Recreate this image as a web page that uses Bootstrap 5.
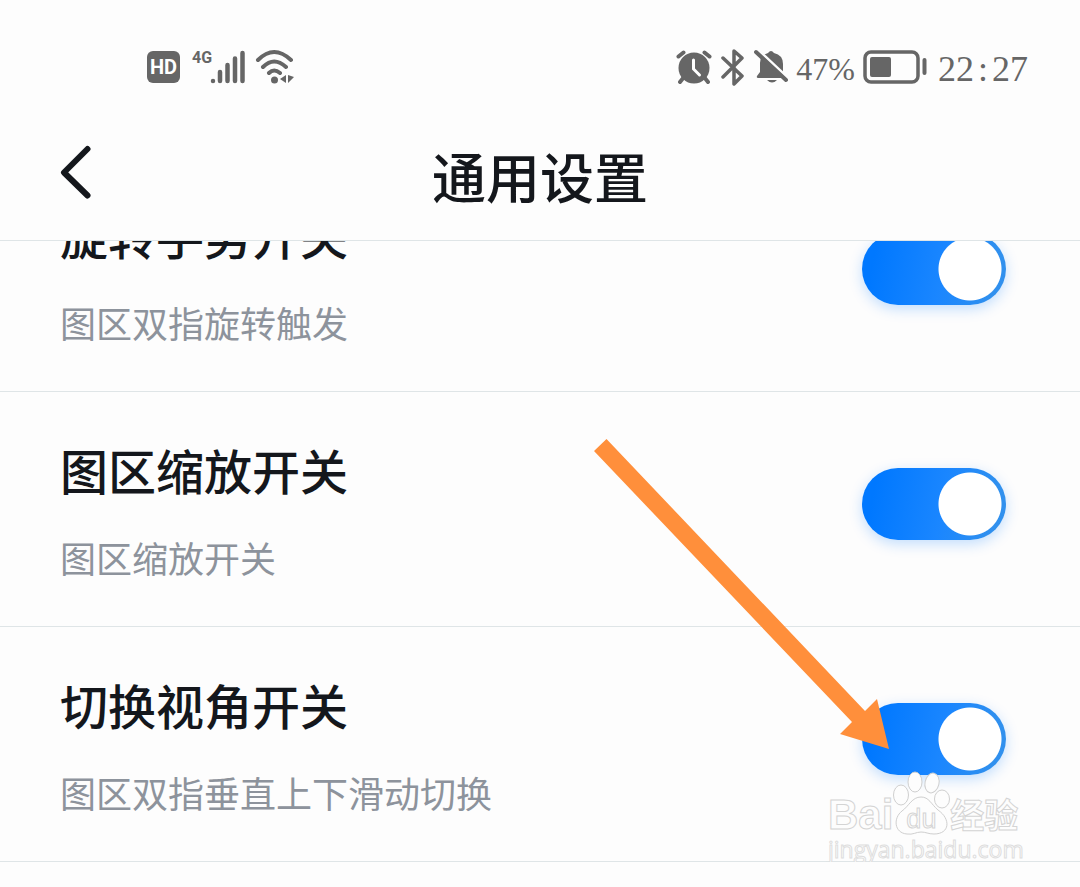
<!DOCTYPE html>
<html lang="zh-CN">
<head>
<meta charset="utf-8">
<meta name="viewport" content="width=device-width, initial-scale=1">
<title>通用设置</title>
<link href="https://cdn.jsdelivr.net/npm/bootstrap@5.3.0/dist/css/bootstrap.min.css" rel="stylesheet">
<style>
  body { background: #fdfdfd; color: #14171c; font-family: "Liberation Sans", "Noto Sans CJK SC", sans-serif; overflow-x: hidden; }
  .app-head { background: #fdfdfd; border-bottom: 1px solid #dfe5e7; }
  .status-bar { height: 134px; padding: 0 52px 0 147px; color: #666; }
  .status-num { font-family: "Liberation Serif", serif; line-height: 40px; padding-top: 4px; }
  .battery-num { font-size: 32px; }
  .clock-num { font-size: 36px; }
  .hd-tag { width: 33px; height: 32px; border-radius: 6px; background: #666; color: #fff; font: 700 20px/32px Roboto, sans-serif; }
  .net-type { width: 18px; font: 700 16px/18px Roboto, sans-serif; white-space: nowrap; }
  .title-bar { height: 106px; padding: 0 60px 14px; }
  .title-bar h1 { font-size: 54px; line-height: 72px; font-weight: 500; }
  .back-btn { color: #14171c; line-height: 0; }
  /* the list is scrolled part of a row beneath the header */
  .setting-list { margin-top: -84px; }
  .setting-row { height: 235px; padding: 46px 74px 0 60px; border-bottom: 1px solid #dfe5e7; }
  .setting-name { font-size: 48px; line-height: 72px; font-weight: 500; margin-bottom: 27px; }
  .setting-hint { font-size: 36px; line-height: 48px; font-weight: 400; color: #8d939c; }
  .toggle-input { appearance: none; width: 144px; height: 72px; margin: 30px 0 0; border-radius: 36px; background: radial-gradient(circle at 36px 36px, #fff 31px, transparent 32px) #d5d9de; }
  .toggle-input:checked { background: radial-gradient(circle at 108px 36px, #fff 31px, transparent 32px), linear-gradient(100deg, #0078ff 10%, #1a86ff 55%, #3090ee 90%); box-shadow: 0 4px 14px rgba(0, 122, 255, .24); }
  .pointer-arrow { right: 190px; top: -188px; z-index: 2; pointer-events: none; }
  .watermark { right: 58px; top: 144px; width: 194px; z-index: 3; color: #fdfdfd; -webkit-text-stroke: 1px #d4d4d4; font-weight: 700; }
  .wm-latin { font-size: 42px; line-height: 40px; }
  .wm-du { left: 13px; bottom: 2px; font-size: 27px; line-height: 28px; font-weight: 400; }
  .wm-han { font-size: 34px; line-height: 38px; }
  .wm-site { font: 400 23px/28px "Open Sans", "Noto Sans", sans-serif; -webkit-text-stroke-color: #dedede; }
</style>
</head>
<body>
<header class="app-head sticky-top">
  <div class="status-bar d-flex align-items-center justify-content-between">
    <div class="d-flex align-items-center">
      <span class="hd-tag me-2 text-center">HD</span>
      <span class="net-type ms-1 align-self-start">4G</span>
      <svg width="36" height="34" viewBox="0 0 36 34" aria-hidden="true"><path d="M3 31v0M10 22v9M17.500 15v16M25 8.500v22.500M32.500 3v28" fill="none" stroke="#666" stroke-width="4.500" stroke-linecap="round"/></svg>
      <svg class="ms-2" width="42" height="36" viewBox="0 0 42 36" aria-hidden="true"><g fill="none" stroke="#666" stroke-width="4" stroke-linecap="round"><path d="M4 11Q20-5 37 11M9 18Q20 7 32 18M15 24Q20 19 26 24"/></g><circle cx="20.500" cy="31" r="3.500" fill="#666"/><path d="M32 26v8l-6-4zM34 26v8l6-6z" fill="#666"/></svg>
    </div>
    <div class="d-flex align-items-center">
      <svg class="me-2" width="36" height="36" viewBox="0 0 36 36" aria-hidden="true"><g stroke="#666" stroke-width="4" stroke-linecap="round"><path d="M2.500 7.500l5-4M28.500 3.500l5 4M8 28l-4 5M28 28l4 5"/></g><circle cx="18" cy="19" r="15.500" fill="#666"/><path d="M17.500 11v9l6 6" fill="none" stroke="#fff" stroke-width="3" stroke-linecap="round"/></svg>
      <svg class="me-2" width="26" height="38" viewBox="0 0 26 38" aria-hidden="true"><path d="M3 10l19 18-8 8V3l8 7L3 29" fill="none" stroke="#666" stroke-width="3.500" stroke-linecap="round" stroke-linejoin="round"/></svg>
      <svg class="me-2" width="34" height="38" viewBox="0 0 34 38" aria-hidden="true"><path d="M5 30q-3 0-2-2l3-4v-9q0-8 8-10 3-4 6 0 9 2 9 11v8l3 4v2zM13 32h10q-5 5-10 0z" fill="#666"/><path d="M3 1l31 29" stroke="#fdfdfd" stroke-width="3"/><path d="M2 4l30 28" stroke="#666" stroke-width="4" stroke-linecap="round"/></svg>
      <span class="status-num battery-num me-2">47%</span>
      <svg class="me-2" width="67" height="34" viewBox="0 0 67 34" aria-hidden="true"><rect x="2" y="2" width="53" height="30" rx="6" fill="none" stroke="#666" stroke-width="3.500"/><rect x="7" y="7" width="21" height="20" rx="2" fill="#666"/><path d="M61.500 10v13" stroke="#666" stroke-width="4" stroke-linecap="round"/></svg>
      <span class="status-num clock-num d-flex"><span>22</span><span class="px-1">:</span><span>27</span></span>
    </div>
  </div>
  <nav class="title-bar row g-0 align-items-center">
    <div class="col">
      <button type="button" class="btn back-btn border-0 p-0 pb-3" aria-label="返回"><svg width="34" height="56" viewBox="0 0 34 56" aria-hidden="true"><path d="M27.500 5L4 28.500 27.500 51.500" fill="none" stroke="currentColor" stroke-width="6" stroke-linecap="round" stroke-linejoin="round"/></svg></button>
    </div>
    <h1 class="col-auto m-0">通用设置</h1>
    <div class="col"></div>
  </nav>
</header>

<main class="setting-list">
  <section class="setting-row d-flex justify-content-between align-items-start">
    <div>
      <label class="setting-name d-block" for="rotate">旋转手势开关</label>
      <p class="setting-hint m-0">图区双指旋转触发</p>
    </div>
    <input class="toggle-input flex-shrink-0" type="checkbox" role="switch" id="rotate" checked>
  </section>
  <section class="setting-row d-flex justify-content-between align-items-start">
    <div>
      <label class="setting-name d-block" for="zoom">图区缩放开关</label>
      <p class="setting-hint m-0">图区缩放开关</p>
    </div>
    <input class="toggle-input flex-shrink-0" type="checkbox" role="switch" id="zoom" checked>
  </section>
  <section class="setting-row position-relative d-flex justify-content-between align-items-start">
    <div>
      <label class="setting-name d-block" for="angle">切换视角开关</label>
      <p class="setting-hint m-0">图区双指垂直上下滑动切换</p>
    </div>
    <input class="toggle-input flex-shrink-0" type="checkbox" role="switch" id="angle" checked>
    <svg class="pointer-arrow position-absolute" width="296" height="311" viewBox="0 0 296 311" aria-hidden="true"><path d="M12.500 0L271 272l12-12 12 50-49-15 12-12L0 12z" fill="#ff8f3b"/></svg>
    <div class="watermark position-absolute">
      <div class="d-flex align-items-end">
        <span class="wm-latin">Bai</span>
        <span class="position-relative">
          <svg class="d-block" width="57" height="64" viewBox="0 0 57 64" aria-hidden="true"><g fill="#fdfdfd" stroke="#cfcfcf"><path d="M28 26c8 0 10 7 17 13 13 9 12 24-4 24-6 0-8-2-13-2s-8 3-14 2C1 62 0 47 9 40c7-5 10-14 19-14z"/><ellipse cx="8" cy="24" rx="7.500" ry="10"/><ellipse cx="22" cy="11" rx="7" ry="10"/><ellipse cx="39" cy="12" rx="7" ry="10" transform="rotate(12 39 12)"/><ellipse cx="49" cy="28" rx="7.500" ry="9"/></g></svg>
          <span class="wm-du position-absolute">du</span>
        </span>
        <span class="wm-han">经验</span>
      </div>
      <div class="wm-site">jingyan.baidu.com</div>
    </div>
  </section>
</main>
<script src="https://cdn.jsdelivr.net/npm/bootstrap@5.3.0/dist/js/bootstrap.bundle.min.js"></script>
</body>
</html>
